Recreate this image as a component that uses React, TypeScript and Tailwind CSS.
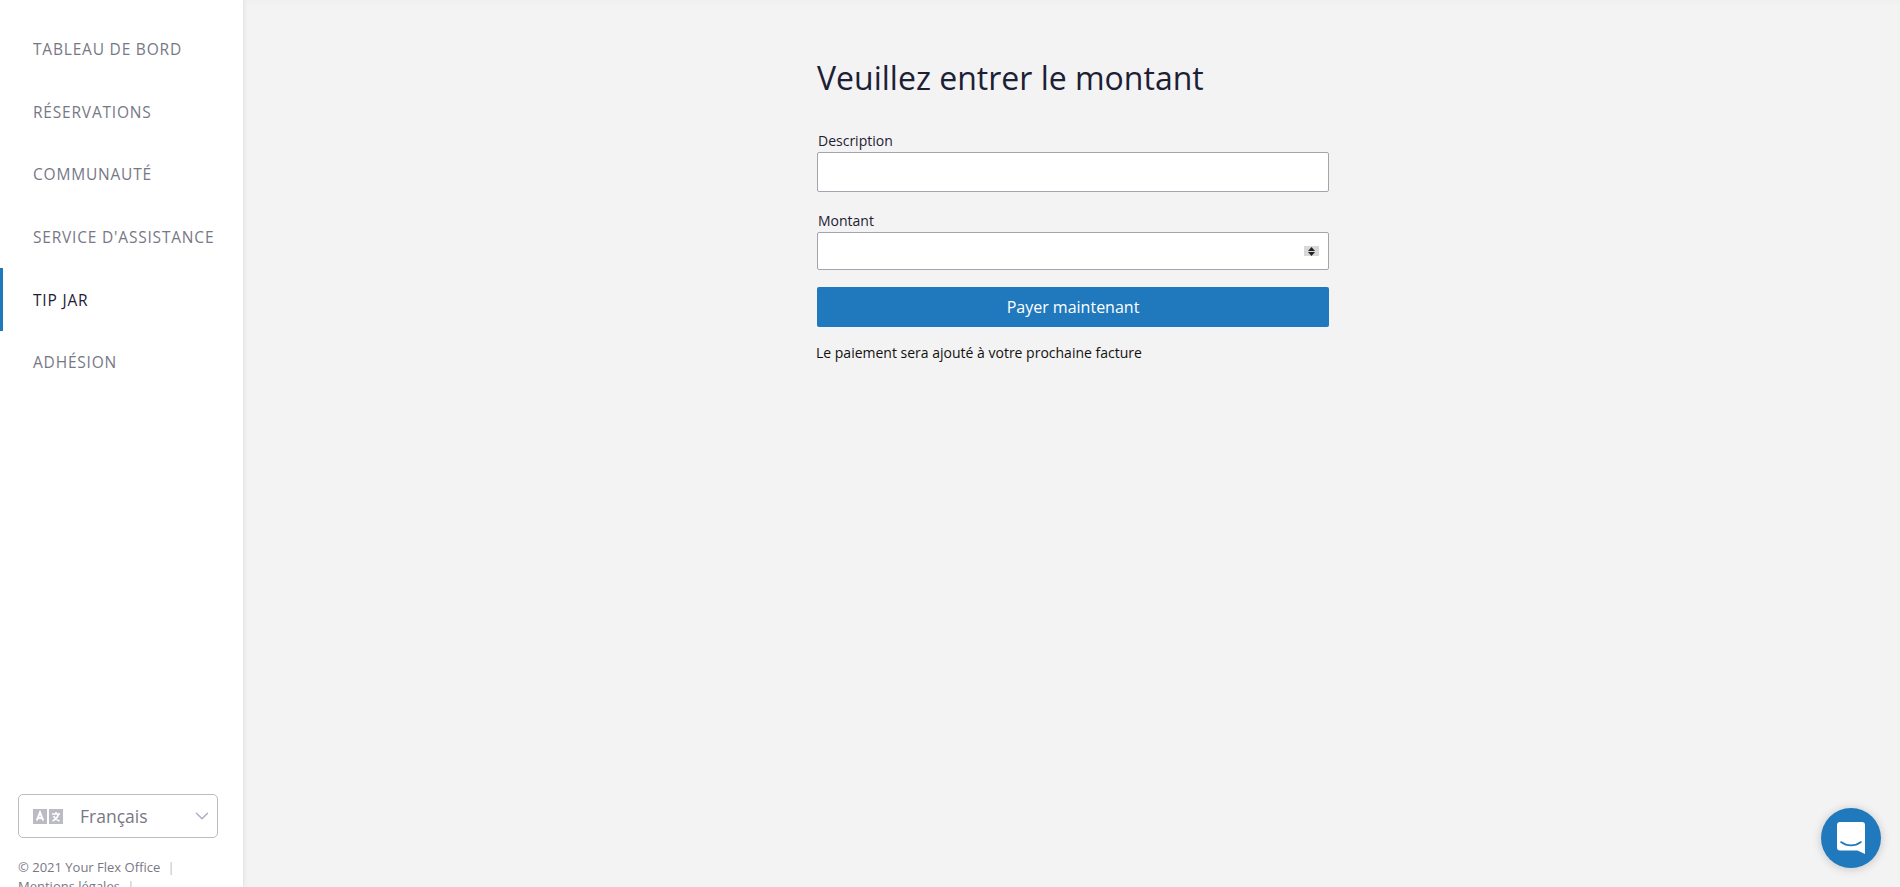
import { ChevronDown } from 'lucide-react';

const navItems = [
  { label: 'Tableau de bord', active: false },
  { label: 'Réservations', active: false },
  { label: 'Communauté', active: false },
  { label: "Service d'assistance", active: false },
  { label: 'Tip Jar', active: true },
  { label: 'Adhésion', active: false },
];

function LanguageIcon() {
  return (
    <svg width="30" height="15" viewBox="0 0 30 15" className="shrink-0">
      <rect x="0" y="0" width="14" height="15" fill="#bbbcc3" />
      <rect x="16" y="0" width="14" height="15" fill="#bbbcc3" />
      <path d="M3.8 11.5 L7 3.5 L10.2 11.5 M5 9 H9" fill="none" stroke="#fff" strokeWidth="2" />
      <path d="M19 5 H27 M23 3 V5 M25.5 5 C24.8 8 22.5 10.5 19.5 12 M20.5 7 C21.5 9 23.5 11 26.5 12" fill="none" stroke="#fff" strokeWidth="1.6" />
    </svg>
  );
}

function Spinner() {
  return (
    <div className="absolute right-[10px] top-[14px] flex h-[10px] w-[15px] flex-col items-center justify-center gap-px bg-[#d8d8d8]">
      <svg width="7" height="4" viewBox="0 0 7 4"><path d="M3.5 0 L7 4 H0 Z" fill="#222" /></svg>
      <svg width="7" height="4" viewBox="0 0 7 4"><path d="M0 0 H7 L3.5 4 Z" fill="#222" /></svg>
    </div>
  );
}

export default function App() {
  return (
    <div className="flex h-screen overflow-hidden bg-[#f3f3f3] font-['Open_Sans',sans-serif]">
      <aside className="flex w-[243px] shrink-0 flex-col justify-between overflow-hidden bg-white shadow-[0_0_5px_rgba(0,0,0,0.1)]">
        <nav className="pt-[18px]">
          {navItems.map((item) => (
            <a
              key={item.label}
              href="#"
              className={`flex h-[62.6px] items-center pt-px text-[15.5px] uppercase tracking-[0.8px] ${
                item.active ? 'border-l-[3px] border-[#2079bd] pl-[30px] text-[#1d2035]' : 'pl-[33px] text-[#777885]'
              }`}
            >
              {item.label}
            </a>
          ))}
        </nav>
        <div className="h-[93px] px-[18px]">
          <div className="flex h-[44px] w-[200px] items-center rounded-[5px] border border-[#bbbcc3] pl-[14px] pr-[4px] text-[17.5px] text-[#777885]">
            <LanguageIcon />
            <span className="ml-[17px] flex-1">Français</span>
            <ChevronDown size={22} strokeWidth={1.5} className="text-[#a9abc4]" />
          </div>
          <p className="mt-[20px] w-[190px] text-[13px] leading-[19px] text-[#777885]">
            © 2021 Your Flex Office <span className="mx-[4px] text-[#bbbcc3]">|</span> Mentions légales <span className="mx-[4px] text-[#bbbcc3]">|</span>
          </p>
        </div>
      </aside>

      <main className="flex flex-1 justify-center shadow-[inset_0_3px_4px_rgba(0,0,0,0.015)]">
        <div className="ml-[3px] mt-[54px] w-[512px]">
          <h1 className="text-[32px] leading-[48px] text-[#1d2035]">Veuillez entrer le montant</h1>
          <form className="mt-[30px] text-[#1d2035]">
            <label className="block pb-[2px] pl-px text-[14px] leading-[18px]">Description</label>
            <input type="text" className="block h-[40px] w-full rounded-[2px] border border-[#a4a4ae] bg-white" />
            <label className="mt-[20px] block pb-[2px] pl-px text-[14px] leading-[18px]">Montant</label>
            <div className="relative">
              <input type="text" className="block h-[38px] w-full rounded-[2px] border border-[#a4a4ae] bg-white" />
              <Spinner />
            </div>
            <button type="button" className="mt-[17px] h-[40px] w-full rounded-[2px] bg-[#2079bd] text-[16px] text-white">
              Payer maintenant
            </button>
            <p className="-ml-px mt-[16px] text-[14px] leading-[20px] text-[#111]">Le paiement sera ajouté à votre prochaine facture</p>
          </form>
        </div>
      </main>

      <button type="button" className="absolute bottom-[19px] right-[19px] flex h-[60px] w-[60px] items-center justify-center rounded-full bg-[#2079bd] shadow-[0_1px_10px_rgba(0,0,0,0.2)]">
        <svg width="28" height="32" viewBox="0 0 28 32">
          <path d="M3 0 H25 A3 3 0 0 1 28 3 V32 L20.5 28.5 H3 A3 3 0 0 1 0 25.5 V3 A3 3 0 0 1 3 0 Z" fill="#fff" />
          <path d="M4 20 C10 24.5 18 24.5 24 20" fill="none" stroke="#2079bd" strokeWidth="1.6" strokeLinecap="round" />
        </svg>
      </button>
    </div>
  );
}
